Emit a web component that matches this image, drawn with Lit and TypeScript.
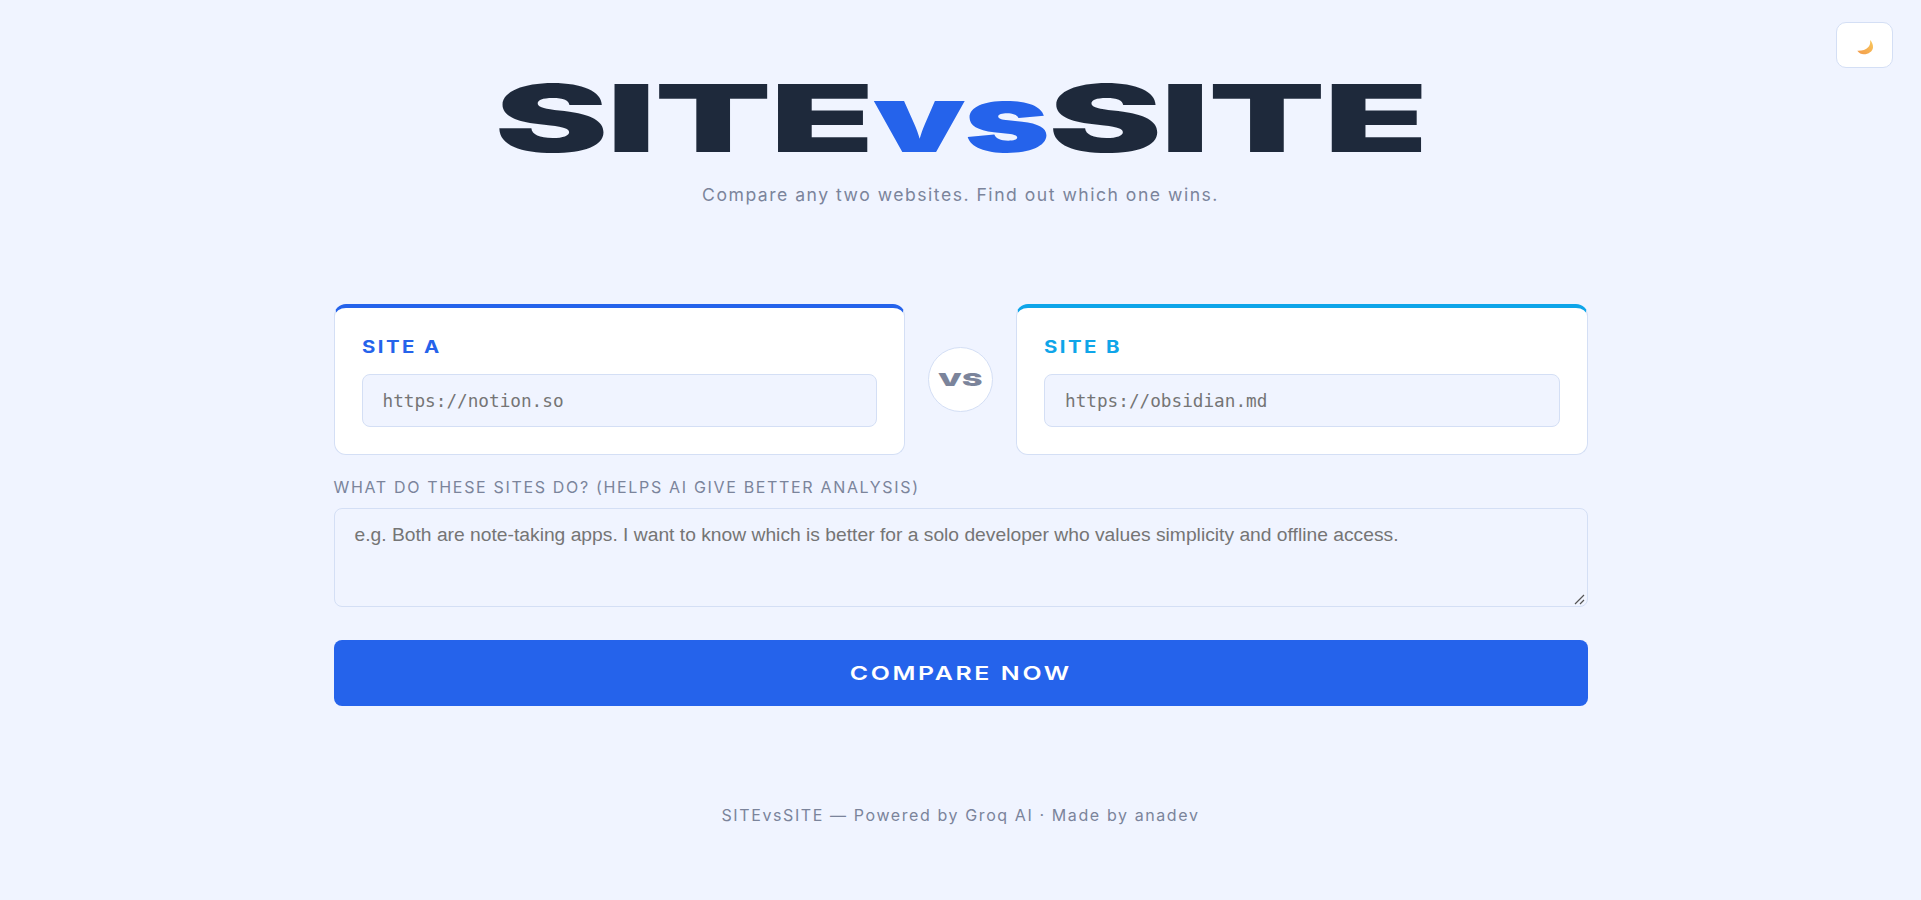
import { LitElement, html, css } from 'lit';
import { customElement } from 'lit/decorators.js';

@customElement('app-root')
export class AppRoot extends LitElement {
  static styles = css`
    :host {
      display: block;
      min-height: 900px;
      background: #f0f4ff;
      font-family: Inter, 'Liberation Sans', sans-serif;
      color: #1e293b;
    }
    .theme {
      position: absolute;
      top: 22px;
      right: 28px;
      width: 57px;
      height: 46px;
      padding: 0;
      display: flex;
      align-items: center;
      justify-content: center;
      background: #fff;
      border: 1px solid #d4dff5;
      border-radius: 10px;
    }
    .page {
      width: 1254px;
      margin: 0 auto;
      display: flex;
      flex-direction: column;
    }
    header {
      padding-top: 72px;
      display: flex;
      flex-direction: column;
      align-items: center;
    }
    h1 {
      margin: 0;
      height: 92px;
      font-size: 93px;
      line-height: 92px;
      font-weight: 900;
      letter-spacing: -1px;
      white-space: nowrap;
      transform: scaleX(1.838);
    }
    /* the "vs" is narrower than the caps around it */
    h1 span {
      display: inline-block;
      margin: 0 -8px;
      color: #2563eb;
      transform: scaleX(0.857);
    }
    .tagline {
      margin: 19px 0 0;
      font-size: 17.6px;
      line-height: 24px;
      letter-spacing: 1.5px;
      color: #7b849b;
    }
    .sites {
      margin-top: 97px;
      display: grid;
      grid-template-columns: 1fr 65px 1fr;
      gap: 23px;
      align-items: center;
    }
    .card {
      height: 151px;
      box-sizing: border-box;
      padding: 27px;
      background: #fff;
      border: 1px solid #d4dff5;
      border-top: 4px solid #2563eb;
      border-radius: 12px;
    }
    .card.b {
      border-top-color: #0ea5e9;
    }
    .card label {
      display: block;
      height: 16px;
      margin: 4px 0 19px;
      font-size: 17px;
      line-height: 16px;
      font-weight: 700;
      letter-spacing: 2px;
      color: #2563eb;
      transform: scaleX(1.2);
      transform-origin: left;
    }
    .card.b label {
      color: #0ea5e9;
    }
    input {
      display: block;
      width: 100%;
      height: 53px;
      box-sizing: border-box;
      padding: 0 20px;
      background: #f0f4ff;
      border: 1px solid #d4dff5;
      border-radius: 8px;
      font-family: 'DejaVu Sans Mono', monospace;
      font-size: 17.7px;
      outline: none;
    }
    .vs {
      width: 65px;
      height: 65px;
      display: flex;
      align-items: center;
      justify-content: center;
      box-sizing: border-box;
      background: #fff;
      border: 1px solid #d4dff5;
      border-radius: 50%;
      font-size: 18px;
      color: #7b849b;
    }
    .vs b {
      font-weight: 900;
      transform: scaleX(1.7);
    }
    .context {
      margin-top: 21px;
      display: flex;
      flex-direction: column;
      gap: 10px;
    }
    .context label {
      font-size: 16px;
      line-height: 22px;
      letter-spacing: 1.67px;
      color: #7b849b;
    }
    .field {
      position: relative;
      height: 99px;
    }
    textarea {
      display: block;
      width: 100%;
      height: 99px;
      box-sizing: border-box;
      padding: 14px 20px;
      background: #f0f4ff;
      border: 1px solid #d4dff5;
      border-radius: 8px;
      font-family: 'Liberation Sans', Arial, sans-serif;
      font-size: 19.25px;
      line-height: 24px;
      resize: none;
      outline: none;
    }
    .grip {
      position: absolute;
      right: 3px;
      bottom: 2px;
    }
    .compare {
      margin-top: 33px;
      height: 66px;
      background: #2563eb;
      border: none;
      border-radius: 8px;
      color: #fff;
      font-family: Inter, 'Liberation Sans', sans-serif;
    }
    .compare span {
      display: inline-block;
      font-size: 19px;
      font-weight: 600;
      letter-spacing: 2px;
      transform: scaleX(1.31);
    }
    footer {
      margin-top: 97px;
      text-align: center;
      font-size: 16px;
      line-height: 24px;
      letter-spacing: 1.6px;
      color: #7b849b;
    }
  `;

  private moon() {
    return html`<svg width="18" height="20" viewBox="0 0 18 20" aria-hidden="true">
      <defs>
        <linearGradient id="moon" x1="0" y1="1" x2="1" y2="0">
          <stop offset="0" stop-color="#f2994a"></stop>
          <stop offset="1" stop-color="#f9c95c"></stop>
        </linearGradient>
      </defs>
      <path
        d="M14 5C14.6 8 14 10 12.4 12 9.8 15 6 15.8 1.3 15.7 3 18 5.5 19.4 8 19.3 12.5 19.2 16.6 16.5 17 12.5 17.2 9.5 16 7 14 5Z"
        fill="url(#moon)"
      ></path>
    </svg>`;
  }

  private site(name: string, cls: string, url: string) {
    return html`<div class="card ${cls}">
      <label>${name}</label>
      <input type="text" placeholder=${url} />
    </div>`;
  }

  render() {
    return html`
      <button class="theme" aria-label="Toggle theme">${this.moon()}</button>
      <div class="page">
        <header>
          <h1>SITE<span>vs</span>SITE</h1>
          <p class="tagline">Compare any two websites. Find out which one wins.</p>
        </header>
        <section class="sites">
          ${this.site('SITE A', 'a', 'https://notion.so')}
          <div class="vs"><b>VS</b></div>
          ${this.site('SITE B', 'b', 'https://obsidian.md')}
        </section>
        <div class="context">
          <label>WHAT DO THESE SITES DO? (HELPS AI GIVE BETTER ANALYSIS)</label>
          <div class="field">
            <textarea
              placeholder="e.g. Both are note-taking apps. I want to know which is better for a solo developer who values simplicity and offline access."
            ></textarea>
            <svg class="grip" width="11" height="11" viewBox="0 0 11 11" aria-hidden="true">
              <path d="M1 10L10 1M6 10L10 6" stroke="#555" stroke-width="1.2" fill="none"></path>
            </svg>
          </div>
        </div>
        <button class="compare"><span>COMPARE NOW</span></button>
        <footer>SITEvsSITE — Powered by Groq AI · Made by anadev</footer>
      </div>
    `;
  }
}
